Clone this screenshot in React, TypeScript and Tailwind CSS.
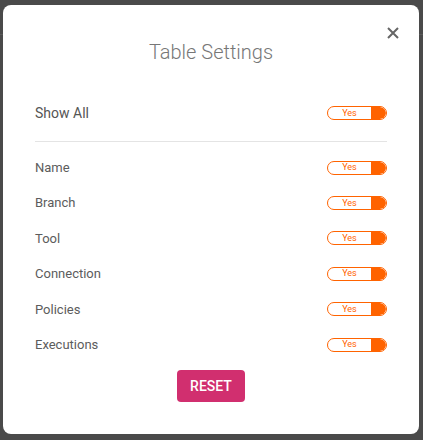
import React, { useState } from "react";

const columns = ["Name", "Branch", "Tool", "Connection", "Policies", "Executions"];

function YesToggle({ on = true }: { on?: boolean }) {
  return (
    <div className="flex h-[14px] w-[60px] overflow-hidden rounded-full border border-[#ff6300] bg-white">
      <span className="flex flex-1 items-center justify-center text-[9px] leading-none text-[#ff6300]">
        {on ? "Yes" : "No"}
      </span>
      <span className="h-full w-[15px] rounded-r-full bg-[#ff6300]" />
    </div>
  );
}

export default function App() {
  const [visible] = useState(columns);

  return (
    <div className="relative h-[440px] w-[423px] overflow-hidden bg-[#4a4a4a] font-['Roboto',sans-serif]">
      <div className="absolute left-0 right-0 top-[34px] h-px bg-[#5a5a5a]" />

      <div className="relative ml-[3px] mt-[5px] flex h-[429px] w-[416px] flex-col rounded-lg bg-white px-8">
        <button className="absolute right-[18px] top-[20px] p-0.5 text-[#666]">
          <svg width="12" height="12" viewBox="0 0 12 12" fill="none" stroke="currentColor" strokeWidth="2">
            <path d="M1 1l10 10M11 1L1 11" />
          </svg>
        </button>

        <h2 className="mt-[33px] text-center text-xl font-light leading-7 text-[#777]">Table Settings</h2>

        <div className="mt-[29px] flex h-[36px] items-center justify-between">
          <span className="text-sm text-[#555]">Show All</span>
          <YesToggle />
        </div>

        <div className="mt-[10px] h-px bg-[#e4e4e4]" />

        <div className="mt-[8px] flex flex-col">
          {visible.map((c) => (
            <div key={c} className="flex h-[35.4px] items-center justify-between">
              <span className="text-[13px] text-[#5c5c5c]">{c}</span>
              <YesToggle />
            </div>
          ))}
        </div>

        <div className="mt-[8px] flex justify-center">
          <button className="h-8 w-[68px] rounded-sm bg-[#d12f6f] text-sm font-medium text-white">RESET</button>
        </div>
      </div>
    </div>
  );
}
